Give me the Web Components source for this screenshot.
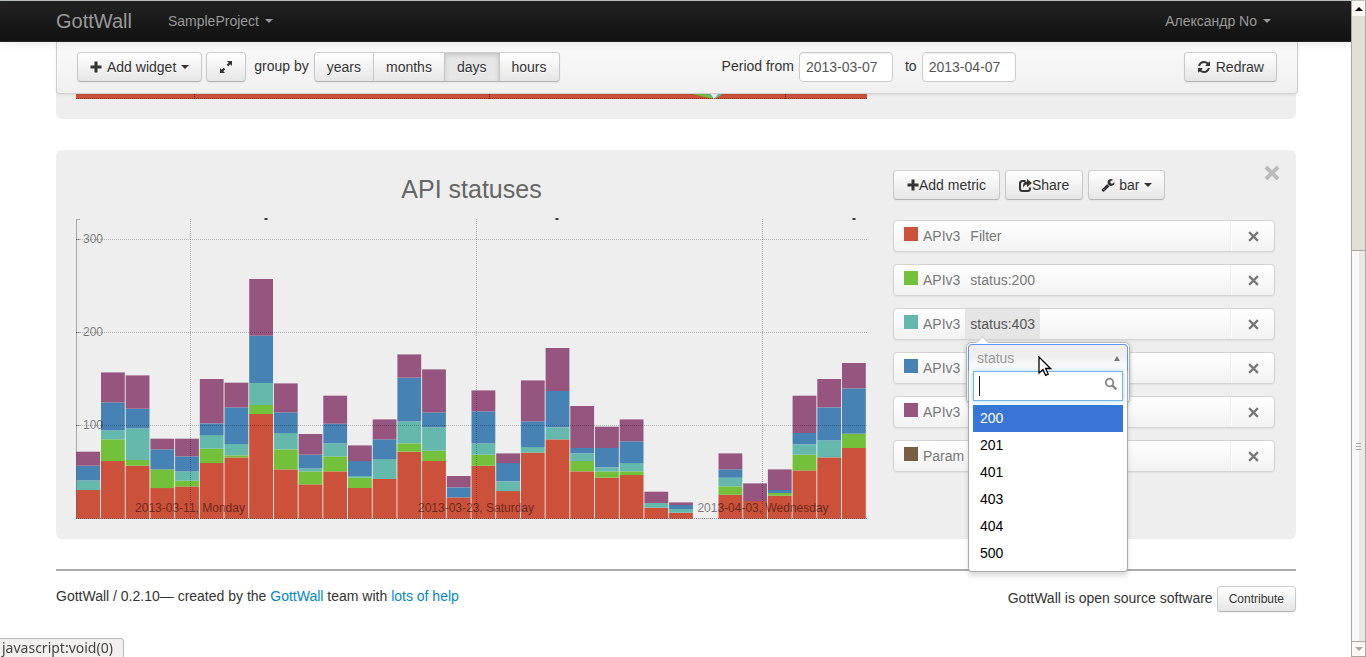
<!DOCTYPE html>
<html lang="en">
<head>
<meta charset="utf-8">
<title>GottWall</title>
<style>
html,body{margin:0;padding:0;background:#fff}
body{font:14px/20px "Liberation Sans",Arial,sans-serif;color:#333;overflow:hidden;min-height:100vh}
</style>
</head>
<body>
<gw-app></gw-app>
<script>
const define = (name, css, html, setup) => {
  const tpl = document.createElement('template');
  tpl.innerHTML = `<style>*{box-sizing:border-box}${css}</style>${html}`;
  customElements.define(name, class extends HTMLElement {
    connectedCallback() {
      if (this.shadowRoot) return;
      this.attachShadow({mode: 'open'}).append(tpl.content.cloneNode(true));
      if (setup) setup(this, this.shadowRoot);
    }
  });
};

/* ---------- icons ---------- */
const ICONS = {
  plus: [12, '0 0 12 12', '<path d="M4.5 .5h3v4h4v3h-4v4h-3v-4h-4v-3h4z"/>'],
  expand: [14, '0 0 14 14', '<path d="M8 1h5v5l-1.7-1.7-2 2-1.6-1.6 2-2zM6 13H1V8l1.7 1.7 2-2 1.6 1.6-2 2z"/>'],
  refresh: [14, '0 0 1792 1792', '<path d="M1639 1056q0 5-1 7-64 268-268 434.5t-478 166.5q-146 0-282.5-55t-243.5-157l-129 129q-19 19-45 19t-45-19-19-45v-448q0-26 19-45t45-19h448q26 0 45 19t19 45-19 45l-137 137q71 66 161 102t187 36q134 0 250-65t186-179q11-17 53-117 8-23 30-23h192q13 0 22.5 9.5t9.5 22.5zm25-800v448q0 26-19 45t-45 19h-448q-26 0-45-19t-19-45 19-45l138-138q-148-137-349-137-134 0-250 65t-186 179q-11 17-53 117-8 23-30 23h-199q-13 0-22.5-9.5t-9.5-22.5v-7q65-268 270-434.5t480-166.5q146 0 284 55.5t245 156.5l130-129q19-19 45-19t45 19 19 45z"/>'],
  share: [13, '0 0 13 13', '<path d="M6.5 2H3.500Q1 2 1 4.500v5Q1 12 3.500 12h5Q11 12 11 9.500V8.500" fill="none" stroke="currentColor" stroke-width="2"/><path d="M8 0l5 4-5 4V5.600Q5.500 5.300 4.500 9 2.800 3 8 2.600z"/>'],
  wrench: [14, '0 0 1792 1792', '<path d="M448 1472q0-26-19-45t-45-19-45 19-19 45 19 45 45 19 45-19 19-45zm644-420l-682 682q-37 37-90 37-52 0-91-37l-106-108q-38-36-38-90 0-53 38-91l681-681q39 98 114.500 173.500t173.500 114.500zm634-435q0 39-23 106-47 134-164.500 217.500t-258.500 83.500q-185 0-316.500-131.500t-131.500-316.500 131.500-316.500 316.500-131.500q58 0 121.500 16.500t107.500 46.500q16 11 16 28t-16 28l-293 169v224l193 107q5-3 79-48.500t135.500-81 70.500-35.500q15 0 23.500 10t8.500 25z"/>'],
  cross: [11, '0 0 10 10', '<path d="M1 1l8 8M9 1L1 9" stroke="currentColor" stroke-width="2"/>'],
  close: [16, '0 0 16 16', '<path d="M2 2l12 12M14 2L2 14" stroke="currentColor" stroke-width="4"/>'],
  caret: [8, '0 0 8 4', '<path d="M0 0h8L4 4z"/>'],
  up: [6, '0 0 6 5', '<path d="M3 0l3 5H0z"/>'],
  scrollup: [8, '0 0 8 4', '<path d="M4 0l4 4H0z"/>'],
  search: [14, '0 0 14 14', '<circle cx="5.500" cy="5.500" r="3.800" fill="none" stroke="currentColor" stroke-width="1.800"/><path d="M8.300 8.300l4 4" stroke="currentColor" stroke-width="2.400"/>']
};
define('gw-icon', ':host{display:inline-flex;flex:none}svg{display:block;fill:currentColor}', '', (el, root) => {
  const [size, box, body] = ICONS[el.getAttribute('name')];
  const [, , w, h] = box.split(' ').map(Number);
  root.innerHTML += `<svg width="${size}" height="${Math.round(size * h / w)}" viewBox="${box}" aria-hidden="true">${body}</svg>`;
});

/* ---------- button ---------- */
define('gw-button', `
:host{display:block}
button{display:flex;align-items:center;justify-content:center;width:100%;height:30px;padding:0 var(--pad,12px);margin:0;font:inherit;color:#333;
 border:1px solid #ccc;border-color:#d0d0d0 #c8c8c8 #b3b3b3;border-radius:var(--radius,4px);
 background:linear-gradient(#fff,#e6e6e6);text-shadow:0 1px 1px rgba(255,255,255,.75);
 box-shadow:inset 0 1px 0 rgba(255,255,255,.2),0 1px 2px rgba(0,0,0,.05)}
:host([active]) button{background:#e6e6e6;box-shadow:inset 0 2px 4px rgba(0,0,0,.15),0 1px 2px rgba(0,0,0,.05)}
:host([small]) button{height:26px;padding:0 11px;font-size:12px}
`, '<button type="button"><slot></slot></button>', (el, root) => {
  if (el.title) root.querySelector('button').setAttribute('aria-label', el.title);
});

/* ---------- top navigation ---------- */
define('gw-navbar', `
:host{display:block;position:relative;z-index:5;border-top:1px solid #c0c4c0}
nav{display:flex;align-items:center;height:41px;padding:0 80px 0 56px;background:linear-gradient(#222,#111);box-shadow:0 1px 10px rgba(0,0,0,.1);border-bottom:1px solid #252525}
a{color:#999;text-decoration:none;display:flex;align-items:center;gap:6px}
.brand{font-size:20px;margin-right:36px}
.user{margin-left:auto}
`, `<nav><a class="brand" href="#">GottWall</a><a href="#">SampleProject<gw-icon name="caret"></gw-icon></a>
<a class="user" href="#">Александр No<gw-icon name="caret"></gw-icon></a></nav>`);

/* ---------- date field ---------- */
define('gw-date', `
:host{display:block}
label{display:flex;align-items:center;gap:5px}
span{padding-bottom:2px}
input{width:94px;height:30px;padding:0 6px;font:inherit;color:#555;border:1px solid #ccc;border-radius:4px;background:#fff;box-shadow:inset 0 1px 1px rgba(0,0,0,.075)}
`, '<label><span></span><input type="text"></label>', (el, root) => {
  root.querySelector('span').textContent = el.getAttribute('label');
  root.querySelector('input').value = el.getAttribute('value');
});

/* ---------- toolbar ---------- */
define('gw-toolbar', `
:host{display:block;position:relative;z-index:4;margin:0 -2px 0 0}
.bar{display:flex;justify-content:space-between;height:52px;padding:10px 20px 0;border:1px solid #d0d0d0;border-top:0;border-radius:0 0 4px 4px;
 background:linear-gradient(#fafafa,#f0f0f0);box-shadow:0 1px 3px rgba(0,0,0,.08)}
.set{display:flex;align-items:flex-start;gap:4px}
.by{line-height:28px;padding:0 1px 0 4px}
.group{display:flex}
.group gw-button{--radius:0;margin-left:-1px}
.group gw-button:first-child{--radius:4px 0 0 4px;margin-left:0}
.group gw-button:last-child{--radius:0 4px 4px 0}
.period{gap:12px;padding-right:6px}
.gap{width:5px}
`, `<div class="bar">
<div class="set">
<gw-button><gw-icon name="plus"></gw-icon><span class="gap"></span>Add widget<span class="gap"></span><gw-icon name="caret"></gw-icon></gw-button>
<gw-button title="Full width"><gw-icon name="expand"></gw-icon></gw-button>
<span class="by">group by</span>
<div class="group"><gw-button>years</gw-button><gw-button>months</gw-button><gw-button active>days</gw-button><gw-button>hours</gw-button></div>
</div>
<div class="set period"><gw-date label="Period from" value="2013-03-07"></gw-date><gw-date label="to" value="2013-04-07"></gw-date></div>
<div class="set"><gw-button><gw-icon name="refresh"></gw-icon><span class="gap"></span>Redraw</gw-button></div>
</div>`);

/* ---------- tail of the preceding widget ---------- */
define('gw-tail', `
:host{display:block;margin-top:-6px;height:31px;padding:0 20px;background:#eee;border-radius:0 0 6px 6px}
svg{display:block;width:calc(100% - 409px);height:11px}
`, `<svg viewBox="0 0 791 11" preserveAspectRatio="none" aria-hidden="true">
<path fill="#cb513a" d="M0 0h791v11H0z"/><path fill="#73c03a" d="M612 5h28l-2 6q-14-3-26-6z"/><path fill="#65b9ac" d="M630 5h18l-9 6z"/><path fill="#eee" d="M634 5h9l-5 6z"/>
<path d="M0 10.500h791" stroke="#000" stroke-opacity=".35" stroke-dasharray="1 1"/>
<path d="M118.500 6v5M413.500 6v5M709.500 6v5" stroke="#000" stroke-opacity=".5" stroke-dasharray="1 1"/></svg>`);

/* ---------- stacked bar chart ---------- */
const COLORS = ['#cb513a', '#73c03a', '#65b9ac', '#4682b4', '#96557e'];
/* cumulative heights of each day's stack, in thirds of a unit */
const DAYS = [
  [86,86,115,159,201],[173,238,265,349,439],[159,176,271,330,430],[92,148,148,208,240],[97,114,142,187,240],
  [167,210,251,286,419],[184,190,224,334,408],[314,341,407,549,719],[148,208,257,319,406],[103,142,151,192,254],
  [142,187,226,285,369],[92,123,128,173,220],[119,119,179,238,298],[201,226,292,423,493],[173,204,274,319,448],
  [64,64,64,94,128],[159,192,226,322,385],[83,83,112,167,196],[198,198,215,292,415],[238,238,274,383,512],
  [142,173,196,212,338],[123,142,154,212,276],[131,142,167,232,298],[33,33,47,47,81],[18,18,29,41,49],
  [0,0,0,0,0],[72,97,123,148,196],[53,53,53,53,106],[69,77,77,86,148],[145,192,223,257,369],
  [184,184,235,334,419],[212,255,255,391,467]];
define('gw-chart', `
:host{display:block}
svg{display:block;width:100%;height:auto;overflow:visible;font-family:"Liberation Sans",Arial,sans-serif;font-size:12px}
text{fill:#000;fill-opacity:.5}
`, '', (el, root) => {
  let s = '';
  DAYS.forEach((stack, i) => {
    let base = 0;
    const x = (0.3 + i * 24.7).toFixed(1);
    stack.forEach((top, k) => {
      if (top > base) s += `<rect x="${x}" y="${(299.7 - top / 3).toFixed(1)}" width="23.8" height="${((top - base) / 3).toFixed(1)}" fill="${COLORS[k]}"/>`;
      base = top;
    });
  });
  for (const y of [20.5, 113.5, 206.5]) s += `<path d="M0 ${y}h791" stroke="#000" stroke-opacity=".25" stroke-dasharray="1 1"/><path d="M0 ${y}h4" stroke="#000" stroke-opacity=".3"/>`;
  for (const x of [114.5, 400.5, 686.5]) s += `<path d="M${x} 0v300" stroke="#000" stroke-opacity=".28" stroke-dasharray="1 1"/>`;
  s += '<path d="M4 .5H.5V299.500" fill="none" stroke="#000" stroke-opacity=".3"/><path d="M0 299.500h791" stroke="#000" stroke-opacity=".45" stroke-dasharray="1 1"/>';
  s += [188.5, 479.5, 776.5].map(x => `<path d="M${x} 0h3" stroke="#000" stroke-width="1.500"/>`).join('');
  s += '<text x="7" y="24">300</text><text x="7" y="117">200</text><text x="7" y="210">100</text>';
  s += '<g text-anchor="middle"><text x="114" y="293">2013-03-11, Monday</text><text x="400" y="293">2013-03-23, Saturday</text><text x="687" y="293">2013-04-03, Wednesday</text></g>';
  root.innerHTML += `<svg viewBox="0 0 791 300" role="img" aria-label="API statuses by day">${s}</svg>`;
});

/* ---------- metric row ---------- */
define('gw-metric', `
:host{display:block;position:relative}
.row{display:flex;height:32px;border:1px solid #d4d4d4;border-radius:4px;background:linear-gradient(#fff,#f2f2f2);box-shadow:0 1px 2px rgba(0,0,0,.06);color:#777}
i{width:14px;height:14px;margin:6px 5px 0 10px;background:var(--c)}
a{display:block;color:inherit;text-decoration:none;line-height:30px;white-space:nowrap}
.val{margin-left:5px;padding:0 5px}
:host([open]) .val{background:#e5e5e5;color:#555}
button{margin:0 0 0 auto;width:43px;padding:0;border:0;border-left:1px solid #fff;box-shadow:-1px 0 0 #eee;background:none;color:#777;display:flex;align-items:center;justify-content:center}
`, '<div class="row"><i></i><a class="name" href="#"></a><a class="val" href="#"></a><button type="button" aria-label="Remove metric"><gw-icon name="cross"></gw-icon></button></div><slot></slot>', (el, root) => {
  root.querySelector('.name').textContent = el.getAttribute('name');
  const val = root.querySelector('.val'), v = el.getAttribute('value');
  if (v) val.textContent = v; else val.remove();
  el.style.setProperty('--c', el.getAttribute('color'));
  if (el.hasAttribute('open')) el.style.zIndex = 3;
});

/* ---------- filter popover ---------- */
define('gw-filter', `
:host{display:block;position:absolute;left:73px;top:34px;width:164px;height:62px;background:#fff;border:1px solid #bbb;border-radius:5px;box-shadow:0 1px 4px rgba(0,0,0,.2)}
:host::before{content:"";position:absolute;left:11px;top:-5px;width:8px;height:8px;background:#fff;border:1px solid #ccc;border-right:0;border-bottom:0;transform:rotate(45deg)}
.drop{position:absolute;left:1px;top:1px;width:160px;background:#fff;border:1px solid #aaa;border-top-color:#5897fb;border-radius:4px;box-shadow:0 4px 5px rgba(0,0,0,.15)}
.head{display:flex;align-items:center;justify-content:space-between;width:100%;height:26px;padding:0 7px 0 8px;border:0;border-radius:4px 4px 0 0;font:inherit;color:#999;background:linear-gradient(#eee 40%,#fff);box-shadow:-1px 0 0 #5897fb,1px 0 0 #5897fb}
.head gw-icon{color:#777}
.search{position:relative;display:block;margin:0 4px}
input{display:block;width:100%;height:30px;padding:0 24px 0 6px;border:1px solid #74b4e4;background:#fff;font:inherit;outline:0;box-shadow:0 0 5px rgba(82,168,236,.5)}
.search gw-icon{position:absolute;right:5px;top:6px;color:#888}
.caret{position:absolute;left:6px;top:5px;width:1px;height:20px;background:#222}
ul{list-style:none;margin:4px 4px;padding:0;color:#000}
li{height:27px;line-height:27px;padding-left:7px}
li[aria-selected=true]{background:#3875d7;color:#fff}
.mouse{position:absolute;left:71px;top:13px}
`, `<div class="drop">
<button class="head" type="button" aria-haspopup="listbox" aria-expanded="true">status<gw-icon name="up"></gw-icon></button>
<label class="search"><input type="text" aria-label="Search values"><span class="caret"></span><gw-icon name="search"></gw-icon></label>
<ul role="listbox"><li role="option" aria-selected="true">200</li><li role="option">201</li><li role="option">401</li><li role="option">403</li><li role="option">404</li><li role="option">500</li></ul>
</div>
<svg class="mouse" width="14" height="21" viewBox="0 0 14 21" aria-hidden="true"><path d="M1 1v16l4-3.500 2.600 5.800 2.600-1.200-2.600-5.600H12.500z" fill="#fff" stroke="#000" stroke-width="1.300"/></svg>`);

/* ---------- widget ---------- */
define('gw-widget', `
:host{display:grid;grid-template-columns:minmax(0,1fr) 382px;column-gap:26px;position:relative;margin-top:31px;padding:20px 21px 20px 20px;background:#eee;border-radius:6px}
h3{margin:0 0 11px;font-size:25px;line-height:38px;font-weight:400;text-align:center;color:#666}
.actions{display:flex;gap:5px;margin-bottom:20px}
.wide{--pad:13px}
.metrics{display:grid;gap:12px}
.x{position:absolute;right:16px;top:15px;padding:0;border:0;background:none;color:#bbb;display:flex}
.gap{width:4px}
`, `<section><h3>API statuses</h3><gw-chart></gw-chart></section>
<aside><div class="actions">
<gw-button class="wide"><gw-icon name="plus"></gw-icon>Add metric</gw-button>
<gw-button class="wide"><gw-icon name="share"></gw-icon>Share</gw-button>
<gw-button><gw-icon name="wrench"></gw-icon><span class="gap"></span>bar<span class="gap"></span><gw-icon name="caret"></gw-icon></gw-button>
</div>
<div class="metrics"><slot></slot></div></aside>
<button class="x" type="button" aria-label="Remove widget"><gw-icon name="close"></gw-icon></button>`);

/* ---------- footer ---------- */
define('gw-footer', `
:host{display:flex;justify-content:space-between;align-items:flex-start;margin-top:30px;padding-top:15px;border-top:2px solid #aaa}
a{color:#08c;text-decoration:none}
p{margin:0}
.right{display:flex;align-items:center;gap:4px}
.right p{padding-bottom:2px}
`, `<p>GottWall / 0.2.10— created by the <a href="#">GottWall</a> team with <a href="#">lots of help</a></p>
<div class="right"><p>GottWall is open source software</p><gw-button small>Contribute</gw-button></div>`);

/* ---------- browser chrome ---------- */
define('gw-scrollbar', `
:host{display:flex;flex-direction:column;position:fixed;right:0;top:0;bottom:0;width:15px;background:#e3dfd8;border:1px solid #a9a7a3;border-top-color:#c0c4c0;z-index:9}
.end{flex:none;height:15px;background:#fdf8f2;display:flex;align-items:center;justify-content:center;color:#000}
.end:first-child{border-bottom:1px solid #a9a7a3}
.end:last-child{border-top:1px solid #a9a7a3;color:#aaa}
.track{flex:235}
.thumb{flex:391;border-top:1px solid #a9a7a3;background:linear-gradient(90deg,#faf9f8 55%,#eae9e7 56%);display:flex;flex-direction:column;gap:2px;align-items:center;justify-content:center}
.thumb b{width:5px;height:1px;background:#aaa}
`, `<div class="end"><gw-icon name="scrollup"></gw-icon></div><div class="track"></div><div class="thumb"><b></b><b></b><b></b></div><div class="end"><gw-icon name="caret"></gw-icon></div>`);
define('gw-status', `
:host{display:block;position:fixed;left:0;bottom:0;height:19px;padding:0 10px 0 2px;background:#f2f0ee;border:1px solid #bbb;border-left:0;border-bottom:0;border-radius:0 4px 0 0;font:14px/18px "Noto Sans","Open Sans",sans-serif;color:#444;z-index:9}
`, '<slot></slot>');

/* ---------- application ---------- */
define('gw-app', `
:host{display:block;padding-right:15px}
main{padding:0 55px 0 56px}
`, `<gw-navbar></gw-navbar>
<main><gw-toolbar></gw-toolbar><gw-tail></gw-tail>
<gw-widget>
<gw-metric color="#cb513a" name="APIv3" value="Filter"></gw-metric>
<gw-metric color="#73c03a" name="APIv3" value="status:200"></gw-metric>
<gw-metric color="#65b9ac" name="APIv3" value="status:403" open><gw-filter></gw-filter></gw-metric>
<gw-metric color="#4682b4" name="APIv3"></gw-metric>
<gw-metric color="#96557e" name="APIv3"></gw-metric>
<gw-metric color="#785f43" name="Param"></gw-metric>
</gw-widget>
<gw-footer></gw-footer></main>
<gw-scrollbar></gw-scrollbar><gw-status>javascript:void(0)</gw-status>`);
</script>
</body>
</html>
